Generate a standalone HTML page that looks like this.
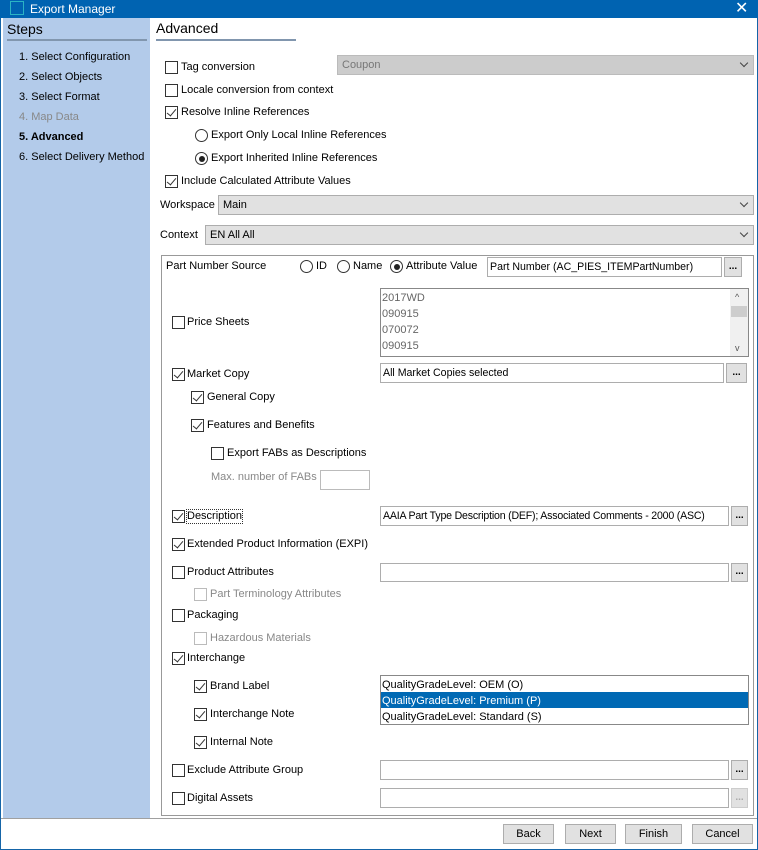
<!DOCTYPE html>
<html><head><meta charset="utf-8"><style>
*{box-sizing:border-box;margin:0;padding:0}
body{width:758px;height:850px;background:#fff;font-family:"Liberation Sans",sans-serif;font-size:11px;color:#000;position:relative;overflow:hidden}
.a{position:absolute;white-space:nowrap}
.t{position:absolute;white-space:nowrap;line-height:13px}
.cb{position:absolute;width:13px;height:13px;border:1px solid #333;background:#fff}
.cb.c::after{content:"";position:absolute;left:3px;top:0px;width:4px;height:8px;border:solid #333;border-width:0 1.3px 1.3px 0;transform:rotate(40deg)}
.cb.d{border-color:#bbb}
.rb{position:absolute;width:13px;height:13px;border:1px solid #333;border-radius:50%;background:#fff}
.rb.c::after{content:"";position:absolute;left:2.5px;top:2.5px;width:6px;height:6px;border-radius:50%;background:#222}
.in{position:absolute;border:1px solid #adadad;background:#fff;padding:2px 2px;line-height:14px;white-space:nowrap;overflow:hidden;font-size:10.6px}
.dd{position:absolute;border:1px solid #adadad;background:#e1e1e1;padding:2px 4px;line-height:14px}
.dd::after{content:"";position:absolute;right:6px;top:4px;width:5px;height:5px;border:solid #444;border-width:0 1px 1px 0;transform:rotate(45deg)}
.btn{position:absolute;border:1px solid #adadad;background:#e1e1e1;text-align:center;line-height:14px;font-weight:bold;font-size:10px}
.pb{position:absolute;border:1px solid #adadad;background:#e1e1e1;text-align:center;line-height:19px}
.g{color:#888}
</style></head><body>
<div class="a" style="left:0;top:0;width:758px;height:850px;border:1px solid #1565a8"></div>
<div class="a" style="left:0;top:0;width:758px;height:18px;background:#0063b1"></div>
<div class="a" style="left:10px;top:1px;width:14px;height:14px;border:1px solid #2bb4c4"></div>
<div class="t" style="left:30px;top:3px;color:#fff;font-size:12px">Export Manager</div>
<div class="t" style="left:735px;top:1px;color:#fff;font-size:16px;line-height:16px">✕</div>
<div class="a" style="left:3px;top:18px;width:147px;height:800px;background:#b3cbea"></div>
<div class="t" style="left:7px;top:21px;font-size:14px;line-height:16px">Steps</div>
<div class="a" style="left:7px;top:39px;width:140px;height:2px;background:#8196ae"></div>
<div class="t" style="left:19px;top:51px">1. Select Configuration</div>
<div class="t" style="left:19px;top:71px">2. Select Objects</div>
<div class="t" style="left:19px;top:91px">3. Select Format</div>
<div class="t" style="left:19px;top:111px;color:#888">4. Map Data</div>
<div class="t" style="left:19px;top:131px;font-weight:bold">5. Advanced</div>
<div class="t" style="left:19px;top:151px">6. Select Delivery Method</div>
<div class="t" style="left:156px;top:20px;font-size:14px;line-height:16px">Advanced</div>
<div class="a" style="left:156px;top:39px;width:140px;height:2px;background:#8196ae"></div>

<div class="cb" style="left:165px;top:61px"></div><div class="t" style="left:181px;top:61px">Tag conversion</div>
<div class="dd" style="left:337px;top:55px;width:417px;height:20px;background:#ccc;color:#777;border-color:#bbb">Coupon</div>
<div class="cb" style="left:165px;top:84px"></div><div class="t" style="left:181px;top:84px">Locale conversion from context</div>
<div class="cb c" style="left:165px;top:106px"></div><div class="t" style="left:181px;top:106px">Resolve Inline References</div>
<div class="rb" style="left:195px;top:129px"></div><div class="t" style="left:211px;top:129px">Export Only Local Inline References</div>
<div class="rb c" style="left:195px;top:152px"></div><div class="t" style="left:211px;top:152px">Export Inherited Inline References</div>
<div class="cb c" style="left:165px;top:175px"></div><div class="t" style="left:181px;top:175px">Include Calculated Attribute Values</div>
<div class="t" style="left:160px;top:199px">Workspace</div>
<div class="dd" style="left:218px;top:195px;width:536px;height:20px">Main</div>
<div class="t" style="left:160px;top:229px">Context</div>
<div class="dd" style="left:205px;top:225px;width:549px;height:20px">EN All All</div>

<div class="a" style="left:161px;top:255px;width:593px;height:561px;border:1px solid #999"></div>
<div class="t" style="left:166px;top:260px">Part Number Source</div>
<div class="rb" style="left:300px;top:260px"></div><div class="t" style="left:316px;top:260px">ID</div>
<div class="rb" style="left:337px;top:260px"></div><div class="t" style="left:353px;top:260px">Name</div>
<div class="rb c" style="left:390px;top:260px"></div><div class="t" style="left:406px;top:260px">Attribute Value</div>
<div class="in" style="left:487px;top:257px;width:235px;height:20px">Part Number (AC_PIES_ITEMPartNumber)</div>
<div class="btn" style="left:724px;top:257px;width:18px;height:20px;line-height:17px">...</div>

<div class="cb" style="left:172px;top:316px"></div><div class="t" style="left:187px;top:316px">Price Sheets</div>
<div class="a" style="left:380px;top:288px;width:369px;height:69px;border:1px solid #888;color:#666;line-height:16px;padding:1px 1px">2017WD<br>090915<br>070072<br>090915</div>
<div class="a" style="left:730px;top:289px;width:18px;height:67px;background:#f0f0f0"></div>
<div class="a" style="left:731px;top:306px;width:16px;height:11px;background:#cdcdcd"></div>
<div class="t" style="left:735px;top:291px;font-size:9px;color:#555">^</div>
<div class="t" style="left:735px;top:342px;font-size:9px;color:#555">v</div>

<div class="cb c" style="left:172px;top:368px"></div><div class="t" style="left:187px;top:368px">Market Copy</div>
<div class="in" style="left:380px;top:363px;width:344px;height:20px">All Market Copies selected</div>
<div class="btn" style="left:726px;top:363px;width:21px;height:20px;line-height:17px">...</div>
<div class="cb c" style="left:191px;top:391px"></div><div class="t" style="left:207px;top:391px">General Copy</div>
<div class="cb c" style="left:191px;top:419px"></div><div class="t" style="left:207px;top:419px">Features and Benefits</div>
<div class="cb" style="left:211px;top:447px"></div><div class="t" style="left:227px;top:447px">Export FABs as Descriptions</div>
<div class="t g" style="left:211px;top:471px">Max. number of FABs</div>
<div class="in" style="left:320px;top:470px;width:50px;height:20px;border-color:#bbb"></div>

<div class="cb c" style="left:172px;top:510px"></div><div class="t" style="left:187px;top:510px;outline:1px dotted #333">Description</div>
<div class="in" style="left:380px;top:506px;width:349px;height:20px;letter-spacing:-0.2px">AAIA Part Type Description (DEF); Associated Comments - 2000 (ASC)</div>
<div class="btn" style="left:731px;top:506px;width:17px;height:20px;line-height:17px">...</div>
<div class="cb c" style="left:172px;top:538px"></div><div class="t" style="left:187px;top:538px">Extended Product Information (EXPI)</div>
<div class="cb" style="left:172px;top:566px"></div><div class="t" style="left:187px;top:566px">Product Attributes</div>
<div class="in" style="left:380px;top:563px;width:349px;height:19px"></div>
<div class="btn" style="left:731px;top:563px;width:17px;height:19px;line-height:16px">...</div>
<div class="cb d" style="left:194px;top:588px"></div><div class="t g" style="left:210px;top:588px">Part Terminology Attributes</div>
<div class="cb" style="left:172px;top:609px"></div><div class="t" style="left:187px;top:609px">Packaging</div>
<div class="cb d" style="left:194px;top:632px"></div><div class="t g" style="left:210px;top:632px">Hazardous Materials</div>
<div class="cb c" style="left:172px;top:652px"></div><div class="t" style="left:187px;top:652px">Interchange</div>
<div class="cb c" style="left:194px;top:680px"></div><div class="t" style="left:210px;top:680px">Brand Label</div>
<div class="cb c" style="left:194px;top:708px"></div><div class="t" style="left:210px;top:708px">Interchange Note</div>
<div class="cb c" style="left:194px;top:736px"></div><div class="t" style="left:210px;top:736px">Internal Note</div>
<div class="a" style="left:380px;top:675px;width:369px;height:50px;border:1px solid #888"></div>
<div class="t" style="left:382px;top:677px;line-height:16px">QualityGradeLevel: OEM (O)</div>
<div class="a" style="left:381px;top:692px;width:367px;height:16px;background:#0069b4"></div>
<div class="t" style="left:382px;top:693px;line-height:16px;color:#fff">QualityGradeLevel: Premium (P)</div>
<div class="t" style="left:382px;top:709px;line-height:16px">QualityGradeLevel: Standard (S)</div>
<div class="cb" style="left:172px;top:764px"></div><div class="t" style="left:187px;top:764px">Exclude Attribute Group</div>
<div class="in" style="left:380px;top:760px;width:349px;height:20px"></div>
<div class="btn" style="left:731px;top:760px;width:17px;height:20px;line-height:17px">...</div>
<div class="cb" style="left:172px;top:792px"></div><div class="t" style="left:187px;top:792px">Digital Assets</div>
<div class="in" style="left:380px;top:788px;width:349px;height:20px"></div>
<div class="btn" style="left:731px;top:788px;width:17px;height:20px;line-height:17px;color:#aaa;border-color:#ccc">...</div>

<div class="a" style="left:1px;top:818px;width:756px;height:1px;background:#a0a0a0"></div>
<div class="pb" style="left:503px;top:824px;width:51px;height:20px">Back</div>
<div class="pb" style="left:565px;top:824px;width:51px;height:20px">Next</div>
<div class="pb" style="left:625px;top:824px;width:57px;height:20px">Finish</div>
<div class="pb" style="left:692px;top:824px;width:61px;height:20px">Cancel</div>
</body></html>
